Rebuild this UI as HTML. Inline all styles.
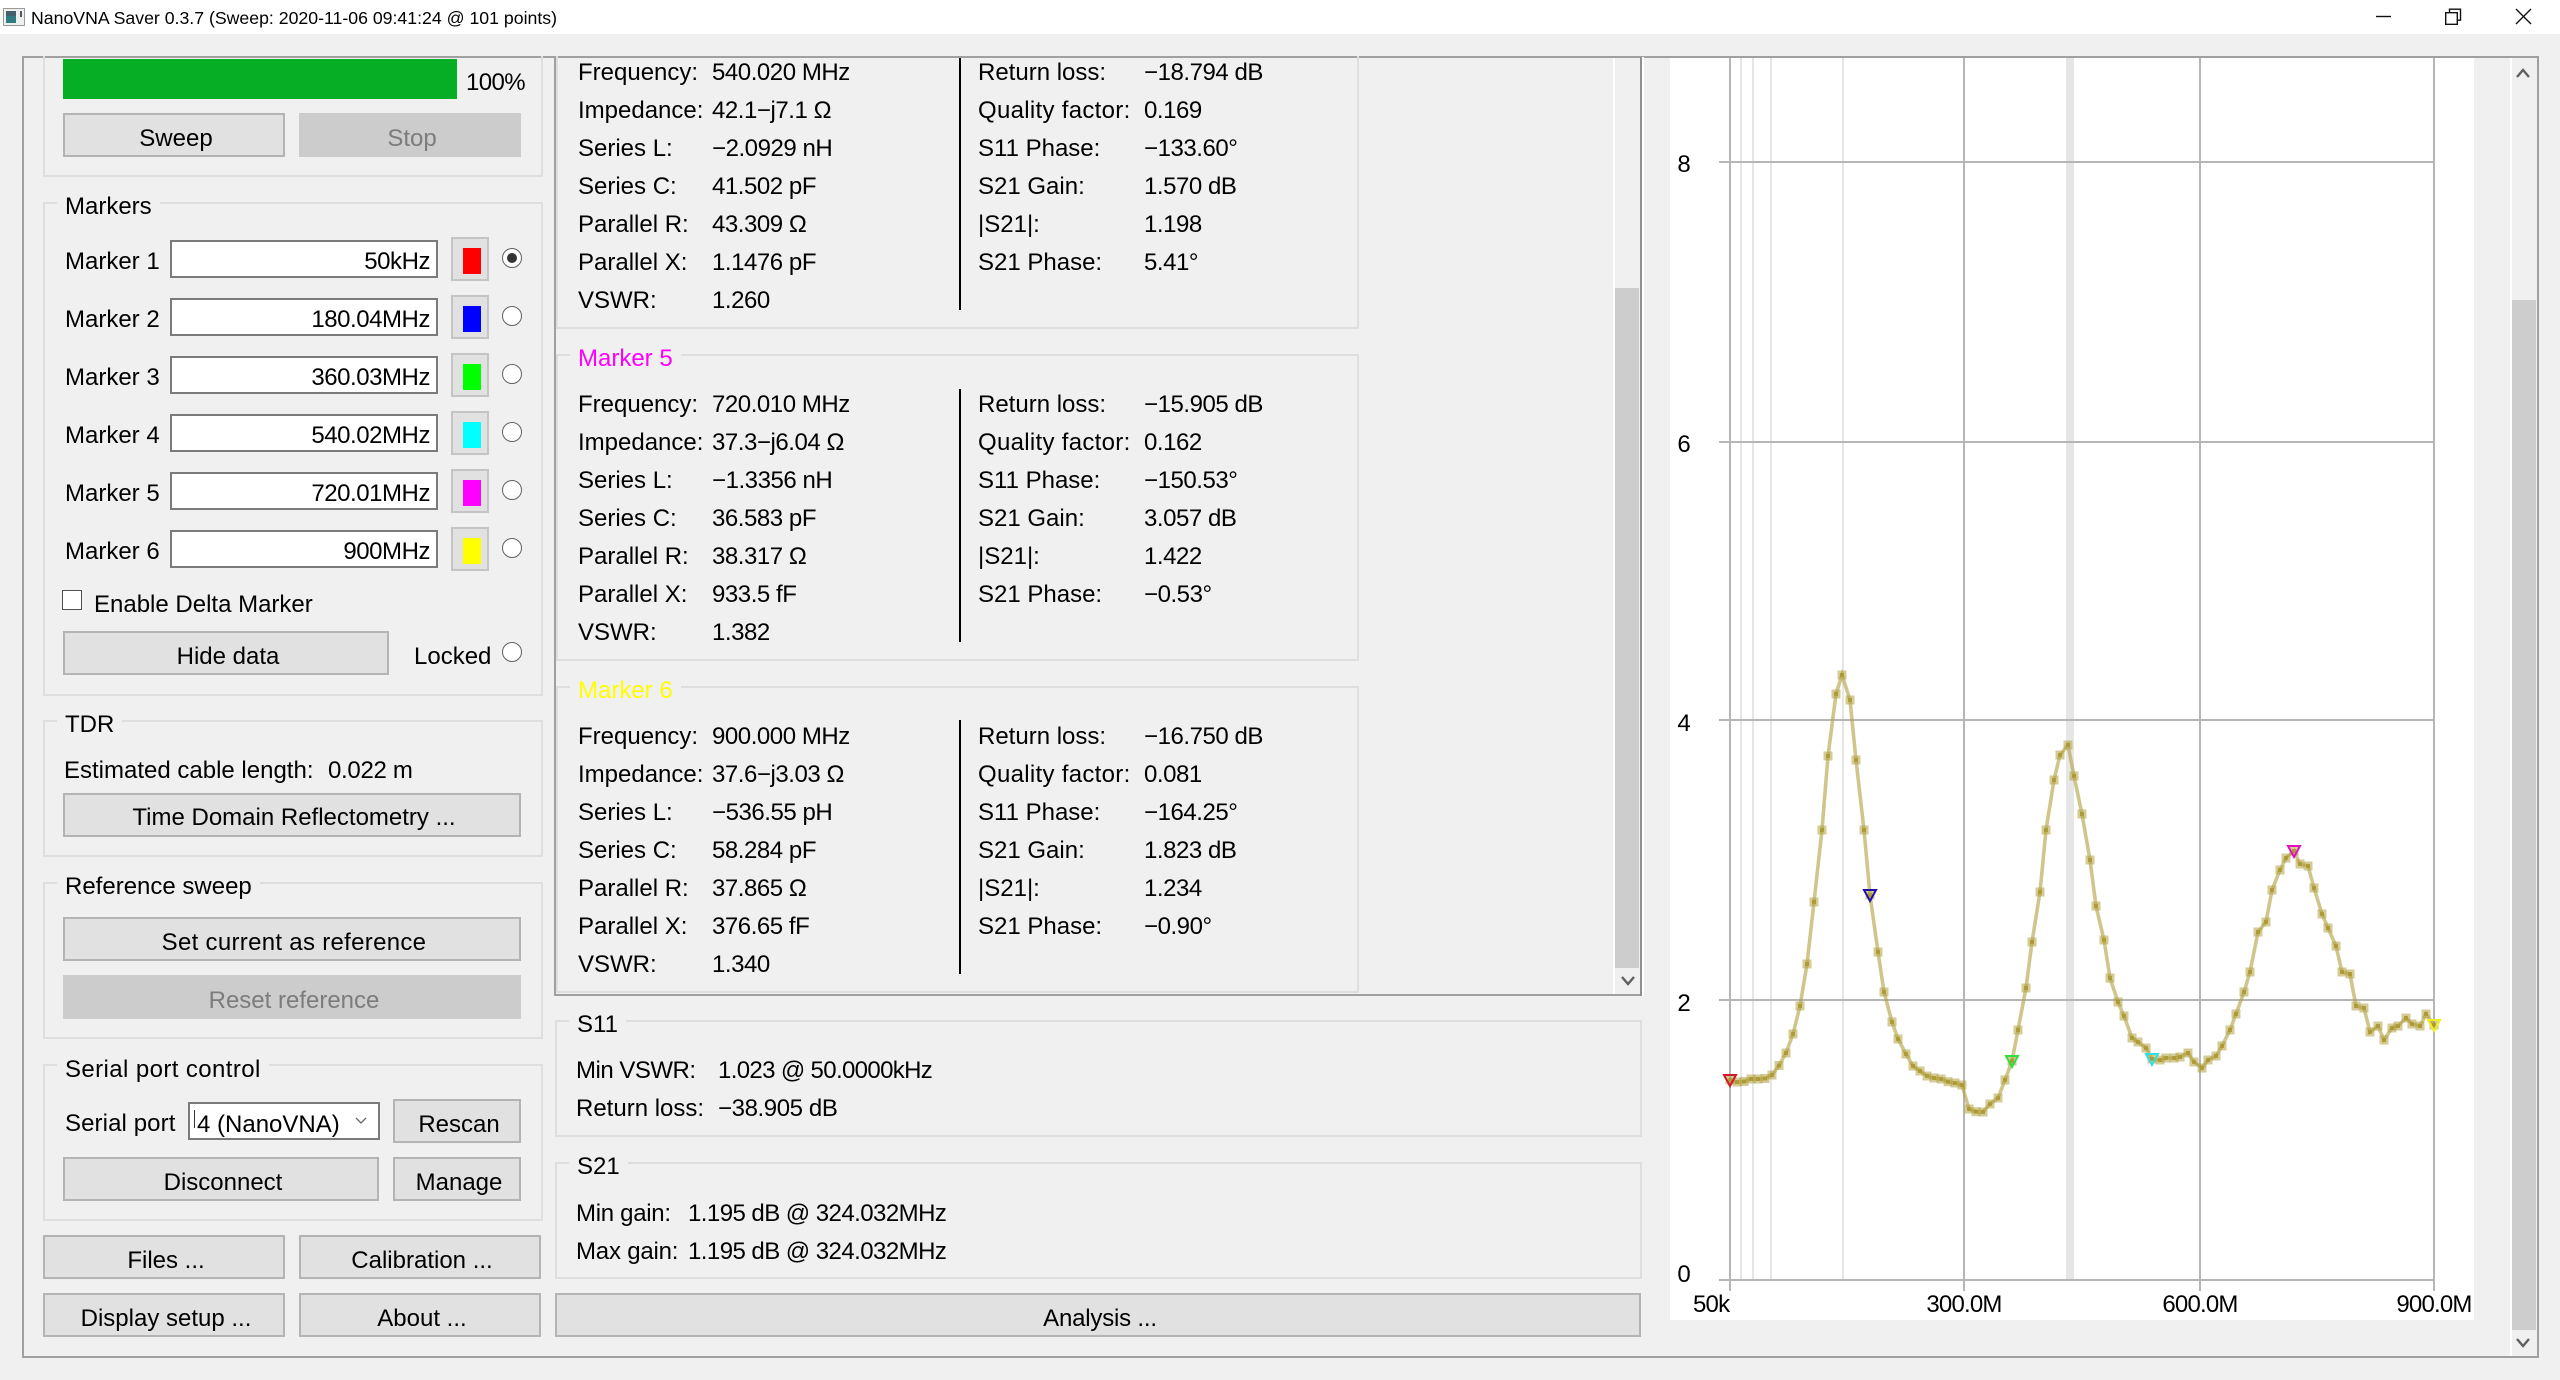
<!DOCTYPE html>
<html><head><meta charset="utf-8"><title>NanoVNA Saver</title>
<style>
html,body{margin:0;padding:0;width:2560px;height:1380px;overflow:hidden;background:#f0f0f0}
body{position:relative;font-family:"Liberation Sans",sans-serif;font-size:24px;color:#000}
div{box-sizing:border-box}
.a{position:absolute}
.t{position:absolute;line-height:33px;height:30px;white-space:nowrap}
.g{position:absolute;border:2px solid #dedede}
.h{position:absolute;line-height:33px;height:30px;background:#f0f0f0;padding:0 8px;white-space:nowrap}
.b{position:absolute;background:#e1e1e1;border:2px solid #b4b4b4;text-align:center;padding-left:4px;padding-top:1px;white-space:nowrap}
.d{background:#ccc;border-color:#ccc;color:#7c7c7c}
.i{position:absolute;left:170px;width:268px;height:38px;background:#fff;border:2px solid #7a7a7a;text-align:right;padding-right:6px;line-height:40px;letter-spacing:-.45px}
.c{position:absolute;left:451px;width:38px;height:44px;background:#e1e1e1;border:2px solid #c4c4c4}
.s{position:absolute;left:463px;width:18px;height:26px}
.r{position:absolute;left:502px;width:20px;height:20px;border-radius:50%;background:#fff;border:1.5px solid #606060}
.l{left:65px}
.m{position:absolute;left:0;top:0;width:0;height:0}
.q{position:absolute;left:578px}.v{position:absolute;left:712px;letter-spacing:-.45px}
.p{position:absolute;left:978px}.w{position:absolute;left:1144px;letter-spacing:-.45px}
.n{position:absolute;line-height:32px;height:30px;white-space:nowrap}
.r0{top:57px}.r1{top:95px}.r2{top:133px}.r3{top:171px}.r4{top:209px}.r5{top:247px}.r6{top:285px}
.vl{position:absolute;left:959px;width:2px;background:#000}
.ax{position:absolute;line-height:33px;height:30px;width:120px;text-align:center;letter-spacing:-.8px;white-space:nowrap}
.ay{position:absolute;left:1672px;width:24px;text-align:center;line-height:33px;height:30px}
.qf{letter-spacing:.3px}
</style></head><body>

<!-- title bar -->
<div class="a" style="left:0;top:0;width:2560px;height:34px;background:#fff"></div>
<svg class="a" style="left:0;top:0" width="40" height="34"><rect x="3.5" y="8.5" width="21" height="17" fill="#eef0f0" stroke="#9a9a9a"/><rect x="6" y="11" width="10" height="12" fill="#2f7d80"/><rect x="6" y="11" width="10" height="5" fill="#45606a"/><rect x="20" y="11" width="2" height="6" fill="#556"/></svg>
<div class="t" style="left:31px;top:2px;font-size:17.7px">NanoVNA Saver 0.3.7 (Sweep: 2020-11-06 09:41:24 @ 101 points)</div>
<svg class="a" style="left:2360px;top:0" width="200" height="34" fill="none" stroke="#111" stroke-width="1.4"><path d="M16 16.5H31"/><path d="M85.7 12.7h11.6v11.6H85.7zM89.5 12.5V9.2h11v11h-3"/><path d="M156 9l15 15M171 9l-15 15"/></svg>

<!-- outer frame -->
<div class="a" style="left:22px;top:56px;width:2517px;height:1302px;border:2px solid #a0a0a0"></div>

<!-- left column -->
<div class="g" style="left:43px;top:56px;width:500px;height:121px;border-top:0"></div>
<div class="a" style="left:63px;top:59px;width:394px;height:40px;background:#06ae26"></div>
<div class="t" style="left:466px;top:66px;letter-spacing:-.6px">100%</div>
<div class="b" style="left:63px;top:113px;width:222px;height:44px;line-height:46px">Sweep</div>
<div class="b d" style="left:299px;top:113px;width:222px;height:44px;line-height:46px">Stop</div>

<div class="g" style="left:43px;top:202px;width:500px;height:494px"></div>
<div class="h" style="left:57px;top:190px">Markers</div>

<div class="t l" style="top:245px">Marker 1</div><div class="i" style="top:240px">50kHz</div><div class="c" style="top:237px"></div><div class="s" style="top:248px;background:#ff0000"></div>
<div class="r" style="top:248px"></div><div class="a" style="left:507px;top:253px;width:10px;height:10px;border-radius:50%;background:#333"></div>
<div class="t l" style="top:303px">Marker 2</div><div class="i" style="top:298px">180.04MHz</div><div class="c" style="top:295px"></div><div class="s" style="top:306px;background:#0000ff"></div><div class="r" style="top:306px"></div>
<div class="t l" style="top:361px">Marker 3</div><div class="i" style="top:356px">360.03MHz</div><div class="c" style="top:353px"></div><div class="s" style="top:364px;background:#00ff00"></div><div class="r" style="top:364px"></div>
<div class="t l" style="top:419px">Marker 4</div><div class="i" style="top:414px">540.02MHz</div><div class="c" style="top:411px"></div><div class="s" style="top:422px;background:#00ffff"></div><div class="r" style="top:422px"></div>
<div class="t l" style="top:477px">Marker 5</div><div class="i" style="top:472px">720.01MHz</div><div class="c" style="top:469px"></div><div class="s" style="top:480px;background:#ff00ff"></div><div class="r" style="top:480px"></div>
<div class="t l" style="top:535px">Marker 6</div><div class="i" style="top:530px">900MHz</div><div class="c" style="top:527px"></div><div class="s" style="top:538px;background:#ffff00"></div><div class="r" style="top:538px"></div>

<div class="a" style="left:62px;top:590px;width:20px;height:20px;background:#fff;border:1.5px solid #505050"></div>
<div class="t" style="left:94px;top:588px">Enable Delta Marker</div>
<div class="b" style="left:63px;top:631px;width:326px;height:44px;line-height:46px">Hide data</div>
<div class="t" style="left:414px;top:640px">Locked</div>
<div class="r" style="top:642px"></div>

<div class="g" style="left:43px;top:720px;width:500px;height:137px"></div>
<div class="h" style="left:57px;top:708px">TDR</div>
<div class="t" style="left:64px;top:754px">Estimated cable length:</div>
<div class="t" style="left:328px;top:754px;letter-spacing:-.3px">0.022 m</div>
<div class="b" style="left:63px;top:793px;width:458px;height:44px;line-height:44px">Time Domain Reflectometry ...</div>

<div class="g" style="left:43px;top:882px;width:500px;height:157px"></div>
<div class="h" style="left:57px;top:870px">Reference sweep</div>
<div class="b" style="left:63px;top:917px;width:458px;height:44px;line-height:46px;letter-spacing:.3px">Set current as reference</div>
<div class="b d" style="left:63px;top:975px;width:458px;height:44px;line-height:46px">Reset reference</div>

<div class="g" style="left:43px;top:1064px;width:500px;height:157px"></div>
<div class="h" style="left:57px;top:1053px;letter-spacing:.4px">Serial port control</div>
<div class="t l" style="top:1107px;letter-spacing:.1px">Serial port</div>
<div class="a" style="left:188px;top:1102px;width:192px;height:38px;background:#fff;border:2px solid #7a7a7a"></div>
<div class="a" style="left:194px;top:1110px;width:1px;height:18px;background:#333"></div>
<div class="t" style="left:197px;top:1108px">4 (NanoVNA)</div>
<svg class="a" style="left:354px;top:1116px" width="14" height="10" fill="none" stroke="#666" stroke-width="1.3"><path d="M2 2l5 5 5-5"/></svg>
<div class="b" style="left:393px;top:1099px;width:128px;height:44px;line-height:46px">Rescan</div>
<div class="b" style="left:63px;top:1157px;width:316px;height:44px;line-height:46px">Disconnect</div>
<div class="b" style="left:393px;top:1157px;width:128px;height:44px;line-height:46px">Manage</div>

<div class="b" style="left:43px;top:1235px;width:242px;height:44px;line-height:46px">Files ...</div>
<div class="b" style="left:299px;top:1235px;width:242px;height:44px;line-height:46px">Calibration ...</div>
<div class="b" style="left:43px;top:1293px;width:242px;height:44px;line-height:46px">Display setup ...</div>
<div class="b" style="left:299px;top:1293px;width:242px;height:44px;line-height:46px">About ...</div>

<!-- middle frame -->
<div class="a" style="left:554px;top:56px;width:2px;height:940px;background:#a0a0a0"></div>
<div class="a" style="left:554px;top:994px;width:1088px;height:2px;background:#a0a0a0"></div>
<div class="a" style="left:1640px;top:57px;width:2px;height:939px;background:#909090"></div>
<div class="a" style="left:1642px;top:57px;width:2px;height:939px;background:#fff"></div>
<div class="a" style="left:1613px;top:58px;width:2px;height:936px;background:#fff"></div>
<div class="a" style="left:1615px;top:288px;width:24px;height:680px;background:#cdcdcd"></div>
<svg class="a" style="left:1620px;top:975px" width="16" height="12" fill="none" stroke="#606060" stroke-width="2.4"><path d="M2 2l6 7 6-7"/></svg>

<!-- marker 4 -->
<div class="g" style="left:556px;top:56px;width:803px;height:273px;border-top:0"></div>
<div class="vl" style="top:58px;height:252px"></div>
<div class="m">
<div class="n q r0">Frequency:</div><div class="n v r0">540.020 MHz</div>
<div class="n q r1">Impedance:</div><div class="n v r1">42.1−j7.1 Ω</div>
<div class="n q r2">Series L:</div><div class="n v r2">−2.0929 nH</div>
<div class="n q r3">Series C:</div><div class="n v r3">41.502 pF</div>
<div class="n q r4">Parallel R:</div><div class="n v r4">43.309 Ω</div>
<div class="n q r5">Parallel X:</div><div class="n v r5">1.1476 pF</div>
<div class="n q r6">VSWR:</div><div class="n v r6">1.260</div>
<div class="n p r0">Return loss:</div><div class="n w r0">−18.794 dB</div>
<div class="n p r1 qf">Quality factor:</div><div class="n w r1">0.169</div>
<div class="n p r2">S11 Phase:</div><div class="n w r2">−133.60°</div>
<div class="n p r3">S21 Gain:</div><div class="n w r3">1.570 dB</div>
<div class="n p r4">|S21|:</div><div class="n w r4">1.198</div>
<div class="n p r5">S21 Phase:</div><div class="n w r5">5.41°</div>
</div>

<!-- marker 5 -->
<div class="g" style="left:556px;top:354px;width:803px;height:307px"></div>
<div class="h" style="left:570px;top:342px;color:#ff00ff">Marker 5</div>
<div class="vl" style="top:389px;height:253px"></div>
<div class="m" style="top:332px">
<div class="n q r0">Frequency:</div><div class="n v r0">720.010 MHz</div>
<div class="n q r1">Impedance:</div><div class="n v r1">37.3−j6.04 Ω</div>
<div class="n q r2">Series L:</div><div class="n v r2">−1.3356 nH</div>
<div class="n q r3">Series C:</div><div class="n v r3">36.583 pF</div>
<div class="n q r4">Parallel R:</div><div class="n v r4">38.317 Ω</div>
<div class="n q r5">Parallel X:</div><div class="n v r5">933.5 fF</div>
<div class="n q r6">VSWR:</div><div class="n v r6">1.382</div>
<div class="n p r0">Return loss:</div><div class="n w r0">−15.905 dB</div>
<div class="n p r1 qf">Quality factor:</div><div class="n w r1">0.162</div>
<div class="n p r2">S11 Phase:</div><div class="n w r2">−150.53°</div>
<div class="n p r3">S21 Gain:</div><div class="n w r3">3.057 dB</div>
<div class="n p r4">|S21|:</div><div class="n w r4">1.422</div>
<div class="n p r5">S21 Phase:</div><div class="n w r5">−0.53°</div>
</div>

<!-- marker 6 -->
<div class="g" style="left:556px;top:686px;width:803px;height:307px"></div>
<div class="h" style="left:570px;top:674px;color:#ffff00">Marker 6</div>
<div class="vl" style="top:720px;height:254px"></div>
<div class="m" style="top:664px">
<div class="n q r0">Frequency:</div><div class="n v r0">900.000 MHz</div>
<div class="n q r1">Impedance:</div><div class="n v r1">37.6−j3.03 Ω</div>
<div class="n q r2">Series L:</div><div class="n v r2">−536.55 pH</div>
<div class="n q r3">Series C:</div><div class="n v r3">58.284 pF</div>
<div class="n q r4">Parallel R:</div><div class="n v r4">37.865 Ω</div>
<div class="n q r5">Parallel X:</div><div class="n v r5">376.65 fF</div>
<div class="n q r6">VSWR:</div><div class="n v r6">1.340</div>
<div class="n p r0">Return loss:</div><div class="n w r0">−16.750 dB</div>
<div class="n p r1 qf">Quality factor:</div><div class="n w r1">0.081</div>
<div class="n p r2">S11 Phase:</div><div class="n w r2">−164.25°</div>
<div class="n p r3">S21 Gain:</div><div class="n w r3">1.823 dB</div>
<div class="n p r4">|S21|:</div><div class="n w r4">1.234</div>
<div class="n p r5">S21 Phase:</div><div class="n w r5">−0.90°</div>
</div>

<!-- S11 / S21 -->
<div class="g" style="left:555px;top:1020px;width:1087px;height:117px"></div>
<div class="h" style="left:569px;top:1008px">S11</div>
<div class="t" style="left:576px;top:1054px;letter-spacing:-.5px">Min VSWR:</div>
<div class="t" style="left:718px;top:1054px;letter-spacing:-.65px">1.023 @ 50.0000kHz</div>
<div class="t" style="left:576px;top:1092px">Return loss:</div>
<div class="t" style="left:718px;top:1092px;letter-spacing:-.4px">−38.905 dB</div>
<div class="g" style="left:555px;top:1162px;width:1087px;height:117px"></div>
<div class="h" style="left:569px;top:1150px">S21</div>
<div class="t" style="left:576px;top:1197px;letter-spacing:-.3px">Min gain:</div>
<div class="t" style="left:688px;top:1197px;letter-spacing:-.55px">1.195 dB @ 324.032MHz</div>
<div class="t" style="left:576px;top:1235px;letter-spacing:-.2px">Max gain:</div>
<div class="t" style="left:688px;top:1235px;letter-spacing:-.55px">1.195 dB @ 324.032MHz</div>
<div class="b" style="left:555px;top:1293px;width:1086px;height:44px;line-height:46px;letter-spacing:-.2px">Analysis ...</div>

<!-- chart -->
<div class="a" style="left:1670px;top:58px;width:804px;height:1262px;background:#fff"></div>
<div class="a" style="left:2510px;top:58px;width:2px;height:1298px;background:#fff"></div>
<div class="a" style="left:2512px;top:300px;width:24px;height:1030px;background:#cdcdcd"></div>
<svg class="a" style="left:2515px;top:67px" width="16" height="12" fill="none" stroke="#606060" stroke-width="2.4"><path d="M2 10l6-7 6 7"/></svg>
<svg class="a" style="left:2515px;top:1337px" width="16" height="12" fill="none" stroke="#606060" stroke-width="2.4"><path d="M2 2l6 7 6-7"/></svg>

<svg class="a" style="left:0;top:0" width="2560" height="1380" viewBox="0 0 2560 1380" fill="none">
<defs><marker id="pt" markerUnits="userSpaceOnUse" markerWidth="9" markerHeight="9" refX="4.5" refY="4.5" overflow="visible"><rect width="9" height="9" fill="rgba(176,160,64,.55)"/><rect x="2.5" y="2.5" width="4" height="4" fill="rgba(170,148,40,.75)"/></marker></defs>
<g stroke="#e6e6e6" stroke-width="2"><path d="M1741 58V1280M1753 58V1280M1771 58V1280M1843 58V1280"/></g>
<rect x="2066" y="58" width="8" height="1222" fill="#e6e6e6"/>
<g stroke="#b6b6b6" stroke-width="2"><path d="M1730 58V1291M1964 58V1291M2200 58V1291M2434 58V1291"/><path d="M1719 162H2434M1719 442H2434M1719 720H2434M1719 1000H2434M1719 1280H2434"/></g>
<polyline stroke="rgba(176,160,64,.6)" stroke-width="3.6" stroke-linejoin="miter" marker-start="url(#pt)" marker-mid="url(#pt)" marker-end="url(#pt)" points="1730,1080 1737,1082 1744,1081.5 1751,1079 1758,1079 1765,1078.5 1772,1075 1779,1065.5 1786,1053 1793,1034 1800,1006 1807,964 1814,902 1822,830 1828,756 1836,694 1842,675 1850,700 1856,760 1864,830 1870,895 1878,952 1884,992 1892,1022 1898,1039 1906,1054 1913,1066 1920,1071 1927,1076 1934,1078 1941,1079 1948,1081.7 1955,1083 1962,1085 1969,1109 1976,1111.7 1983,1112 1990,1104 1998,1098 2005,1080 2012,1061 2018,1030 2026,988 2032,942 2040,892 2046,830 2054,780 2060,755 2068,745 2074,776 2082,814 2090,860 2096,906 2104,940 2110,978 2118,1002 2124,1016 2132,1038 2138,1042 2146,1048 2152,1059 2160,1060 2166,1058 2174,1058 2180,1057 2188,1053 2194,1062 2202,1068 2208,1060 2216,1056 2222,1046 2230,1030 2236,1014 2244,992 2250,972 2258,932 2266,922 2272,890 2280,870 2286,858 2294,851 2300,864 2308,866 2314,888 2322,914 2328,928 2336,946 2342,972 2350,974 2356,1006 2364,1008 2370,1032 2378,1026 2384,1040 2392,1028 2398,1026 2406,1018 2412,1024 2420,1026 2426,1014 2434,1025"/>
<g stroke-width="2" stroke-linejoin="miter">
<path d="M1724 1075H1736L1730 1086Z" stroke="#d01828"/>
<path d="M1864 890H1876L1870 901Z" stroke="#2010a8"/>
<path d="M2006 1056H2018L2012 1067Z" stroke="#30e040"/>
<path d="M2146 1054H2158L2152 1065Z" stroke="#30e0e0"/>
<path d="M2288 846H2300L2294 857Z" stroke="#e010c0"/>
<path d="M2428 1020H2440L2434 1031Z" stroke="#f0f020"/>
</g>
</svg>

<div class="ay" style="top:148px">8</div>
<div class="ay" style="top:428px">6</div>
<div class="ay" style="top:707px">4</div>
<div class="ay" style="top:987px">2</div>
<div class="ay" style="top:1258px">0</div>
<div class="t" style="left:1693px;top:1288px;letter-spacing:-.8px">50k</div>
<div class="ax" style="left:1904px;top:1288px">300.0M</div>
<div class="ax" style="left:2140px;top:1288px">600.0M</div>
<div class="ax" style="left:2374px;top:1288px">900.0M</div>

</body></html>
